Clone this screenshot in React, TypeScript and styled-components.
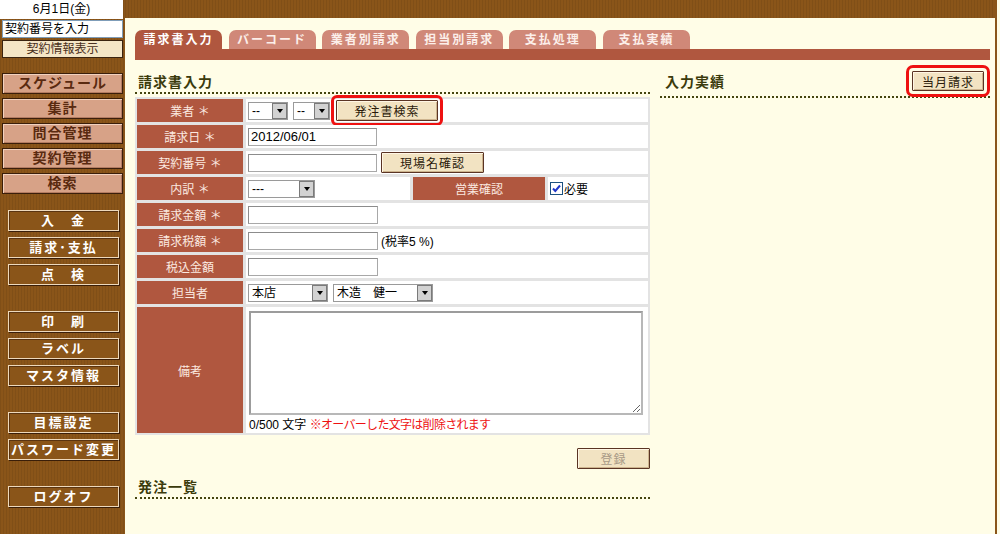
import styled, {createGlobalStyle} from 'styled-components';

const GlobalStyle = createGlobalStyle`
  html, body {
    margin: 0;
    padding: 0;
  }
  body {
    font-family: "Liberation Sans", "Noto Sans CJK JP", sans-serif;
    font-size: 12px;
    background: #fffde7;
    color: #000;
  }
`;

const brown = '#8a5519';
const hatch = `repeating-linear-gradient(90deg, rgba(0,0,0,0.07) 0 1px, transparent 1px 3px)`;

const Page = styled.div`
  display: flex;
  width: 1000px;
  height: 534px;
  overflow: hidden;
  background: #fffde7;
`;

/* ---------- sidebar ---------- */

const Sidebar = styled.aside`
  width: 125px;
  flex-shrink: 0;
  background-color: ${brown};
  background-image: ${hatch};
  display: flex;
  flex-direction: column;
`;

const DateBox = styled.div`
  height: 19px;
  margin-right: 2px;
  background: #fff;
  text-align: center;
  line-height: 19px;
  font-size: 12px;
`;

const SearchInput = styled.div`
  height: 18px;
  margin: 1px 2px 0;
  box-sizing: border-box;
  border: 1px solid #7f9db9;
  background: #fff;
  padding-left: 2px;
  line-height: 16px;
  font-size: 12px;
`;

const InfoButton = styled.div`
  height: 18px;
  margin: 2px 2px 0;
  box-sizing: border-box;
  border: 1px solid #3a2410;
  background: #f4e6c6;
  color: #4a3020;
  text-align: center;
  line-height: 16px;
  font-size: 12px;
`;

const PinkList = styled.nav`
  display: flex;
  flex-direction: column;
  gap: 4px;
  margin: 15px 2px 0;
`;

const PinkButton = styled.div`
  height: 21px;
  box-sizing: border-box;
  border: 1px solid #3a1e0a;
  box-shadow: inset 1px 1px 0 #f2d2bf, inset -1px -1px 0 #b47c62;
  background: #d7a287;
  color: #5a2a10;
  font-weight: bold;
  font-size: 14px;
  letter-spacing: 1px;
  text-align: center;
  line-height: 19px;
`;

const DarkGroups = styled.div`
  display: flex;
  flex-direction: column;
  gap: 26px;
  margin: 16px 6px 0 8px;
`;

const DarkGroup = styled.div`
  display: flex;
  flex-direction: column;
  gap: 6px;
`;

const DarkButton = styled.div`
  height: 21px;
  box-sizing: border-box;
  border: 1px solid #eed9bc;
  box-shadow: 1px 1px 0 #3a1e08, inset 1px 1px 0 #5a3410;
  background: ${brown};
  color: #fff;
  font-weight: bold;
  font-size: 13px;
  letter-spacing: 2px;
  text-align: center;
  line-height: 19px;
  white-space: pre;
`;

/* ---------- main ---------- */

const Main = styled.main`
  flex: 1;
  display: flex;
  flex-direction: column;
  border-right: 2px solid ${brown};
  margin-right: 3px;
`;

const TopBar = styled.div`
  height: 18px;
  background-color: ${brown};
  background-image: ${hatch};
`;

const Content = styled.div`
  flex: 1;
  padding: 12px 5px 0 10px;
`;

const Tabs = styled.div`
  display: flex;
  gap: 6.6px;
  height: 19px;
`;

const Tab = styled.div<{$active?: boolean}>`
  width: 87px;
  border-radius: 7px 7px 0 0;
  background: ${p => (p.$active ? '#b0573f' : '#d08878')};
  color: ${p => (p.$active ? '#fff' : '#fcefea')};
  font-weight: bold;
  font-size: 12px;
  letter-spacing: 2px;
  text-align: center;
  line-height: 20px;
`;

const TabBar = styled.div`
  height: 11px;
  background: #b0573f;
`;

const Columns = styled.div`
  display: grid;
  grid-template-columns: 515px 1fr;
  column-gap: 10px;
  align-items: start;
`;

const Column = styled.section`
  display: flex;
  flex-direction: column;
`;

const Heading = styled.h2<{$top: number}>`
  margin: ${p => p.$top}px 0 0;
  height: 20px;
  padding-left: 3px;
  border-bottom: 2px dotted #45450f;
  color: #3b3b0c;
  font-size: 14px;
  font-weight: bold;
  letter-spacing: 1px;
  line-height: 20px;
`;

const HeadingRow = styled.div`
  margin-top: 6px;
  height: 30px;
  display: flex;
  align-items: center;
  justify-content: space-between;
  padding: 0 6px 0 5px;
  border-bottom: 2px dotted #45450f;
  color: #3b3b0c;
  font-size: 14px;
  font-weight: bold;
  letter-spacing: 1px;
`;

const FormGrid = styled.div`
  margin-top: 3px;
  display: grid;
  grid-template-columns: 106px 164px 132px 1fr;
  grid-template-rows: repeat(8, 23px) 126px;
  gap: 3px;
  padding: 2px;
  background: #e3e3e3;
`;

const Label = styled.div`
  background: #b0573f;
  color: #fbe9e0;
  font-size: 12px;
  display: flex;
  align-items: center;
  justify-content: center;
`;

const Value = styled.div<{$span?: number}>`
  grid-column: span ${p => p.$span ?? 3};
  background: #fff;
  display: flex;
  align-items: center;
  gap: 5px;
  padding-left: 2px;
  font-size: 12px;
  white-space: nowrap;
`;

const NoteCell = styled.div`
  grid-column: span 3;
  background: #fff;
  display: flex;
  flex-direction: column;
  padding: 4px 0 0 3px;
`;

const TextInput = styled.input<{$w: number}>`
  width: ${p => p.$w}px;
  height: 18px;
  box-sizing: border-box;
  border: 1px solid #a8a8a8;
  border-top-color: #8c8c8c;
  border-left-color: #8c8c8c;
  padding: 0 2px;
  font: 13px "Liberation Sans", "Noto Sans CJK JP", sans-serif;
  color: #000;
  background: #fff;
`;

const SelectBox = styled.div<{$w: number}>`
  width: ${p => p.$w}px;
  height: 18px;
  box-sizing: border-box;
  border: 1px solid #9a9a9a;
  background: #fff;
  display: flex;
  align-items: stretch;
  font-size: 12px;
`;

const SelectText = styled.span`
  flex: 1;
  padding-left: 3px;
  line-height: 16px;
  overflow: hidden;
  white-space: pre;
`;

const SelectArrow = styled.span`
  width: 15px;
  box-sizing: border-box;
  border: 1px solid #7a7a7a;
  background: #d2d2d2;
  display: flex;
  align-items: center;
  justify-content: center;
  &::after {
    content: '';
    border-left: 3px solid transparent;
    border-right: 3px solid transparent;
    border-top: 4px solid #000;
  }
`;

const Button = styled.button<{$w: number; $mark?: number; $disabled?: boolean}>`
  width: ${p => p.$w}px;
  height: 21px;
  box-sizing: border-box;
  border: 1px solid #5a3424;
  border-radius: 1px;
  box-shadow: inset 1px 1px 0 #fff6e4, inset -1px -1px 0 #cdb48e;
  background: #f2e3c2;
  color: ${p => (p.$disabled ? '#a89a86' : '#2a1a0a')};
  font: 12px "Liberation Sans", "Noto Sans CJK JP", sans-serif;
  letter-spacing: 1px;
  padding: 0;
  ${p => (p.$mark ? `outline: 3px solid #ee1111; outline-offset: ${p.$mark}px;` : '')}
`;

const Check = styled.span`
  display: inline-flex;
  align-items: center;
  gap: 1px;
  font-size: 12px;
`;

const Memo = styled.textarea`
  width: 394px;
  height: 104px;
  box-sizing: border-box;
  border: 2px solid #b8b8b8;
  border-top-color: #9c9c9c;
  border-left-color: #9c9c9c;
  background: #fff;
  font: 12px "Liberation Sans", "Noto Sans CJK JP", sans-serif;
`;

const Counter = styled.div`
  margin-top: 2px;
  font-size: 12px;
  line-height: 16px;
  white-space: nowrap;
`;

const Warn = styled.span`
  color: #ee1111;
  letter-spacing: -0.7px;
`;

const Actions = styled.div`
  margin-top: 13px;
  display: flex;
  justify-content: flex-end;
`;

function Select({w, value}: {w: number; value: string}) {
  return (
    <SelectBox $w={w}>
      <SelectText>{value}</SelectText>
      <SelectArrow />
    </SelectBox>
  );
}

function Checkbox() {
  return (
    <svg width="13" height="13" viewBox="0 0 13 13">
      <rect x="0.5" y="0.5" width="12" height="12" fill="#fff" stroke="#1c5180" />
      <path d="M3 6.5 L5.3 9 L10 3.5" fill="none" stroke="#2136c8" strokeWidth="2" />
    </svg>
  );
}

const pinkMenu = ['スケジュール', '集計', '問合管理', '契約管理', '検索'];
const darkMenu = [
  ['入　金', '請求･支払', '点　検'],
  ['印　刷', 'ラベル', 'マスタ情報'],
  ['目標設定', 'パスワード変更'],
  ['ログオフ'],
];
const tabs = ['請求書入力', 'バーコード', '業者別請求', '担当別請求', '支払処理', '支払実績'];

export default function App() {
  return (
    <Page>
      <GlobalStyle />
      <Sidebar>
        <DateBox>6月1日(金)</DateBox>
        <SearchInput>契約番号を入力</SearchInput>
        <InfoButton>契約情報表示</InfoButton>
        <PinkList>
          {pinkMenu.map(m => (
            <PinkButton key={m}>{m}</PinkButton>
          ))}
        </PinkList>
        <DarkGroups>
          {darkMenu.map((group, i) => (
            <DarkGroup key={i}>
              {group.map(m => (
                <DarkButton key={m}>{m}</DarkButton>
              ))}
            </DarkGroup>
          ))}
        </DarkGroups>
      </Sidebar>

      <Main>
        <TopBar />
        <Content>
          <Tabs>
            {tabs.map((t, i) => (
              <Tab key={t} $active={i === 0}>{t}</Tab>
            ))}
          </Tabs>
          <TabBar />

          <Columns>
            <Column>
              <Heading $top={12}>請求書入力</Heading>
              <FormGrid>
                <Label>業者 ＊</Label>
                <Value>
                  <Select w={40} value="--" />
                  <Select w={37} value="--" />
                  <Button $w={102} $mark={2} style={{marginLeft: 1}}>発注書検索</Button>
                </Value>

                <Label>請求日 ＊</Label>
                <Value>
                  <TextInput $w={129} defaultValue="2012/06/01" />
                </Value>

                <Label>契約番号 ＊</Label>
                <Value>
                  <TextInput $w={129} />
                  <Button $w={103} style={{marginLeft: -1}}>現場名確認</Button>
                </Value>

                <Label>内訳 ＊</Label>
                <Value $span={1}>
                  <Select w={67} value="---" />
                </Value>
                <Label>営業確認</Label>
                <Value $span={1}>
                  <Check>
                    <Checkbox />
                    必要
                  </Check>
                </Value>

                <Label>請求金額 ＊</Label>
                <Value>
                  <TextInput $w={130} />
                </Value>

                <Label>請求税額 ＊</Label>
                <Value>
                  <TextInput $w={130} />
                  <span style={{marginLeft: -2}}>(税率5 %)</span>
                </Value>

                <Label>税込金額</Label>
                <Value>
                  <TextInput $w={130} />
                </Value>

                <Label>担当者</Label>
                <Value>
                  <Select w={80} value="本店" />
                  <Select w={100} value="木造　健一" />
                </Value>

                <Label>備考</Label>
                <NoteCell>
                  <Memo />
                  <Counter>
                    0/500 文字 <Warn>※オーバーした文字は削除されます</Warn>
                  </Counter>
                </NoteCell>
              </FormGrid>

              <Actions>
                <Button $w={73} $disabled>登録</Button>
              </Actions>

              <Heading $top={8}>発注一覧</Heading>
            </Column>

            <Column>
              <HeadingRow>
                入力実績
                <Button $w={72} $mark={3} style={{height: 20}}>当月請求</Button>
              </HeadingRow>
            </Column>
          </Columns>
        </Content>
      </Main>
    </Page>
  );
}
